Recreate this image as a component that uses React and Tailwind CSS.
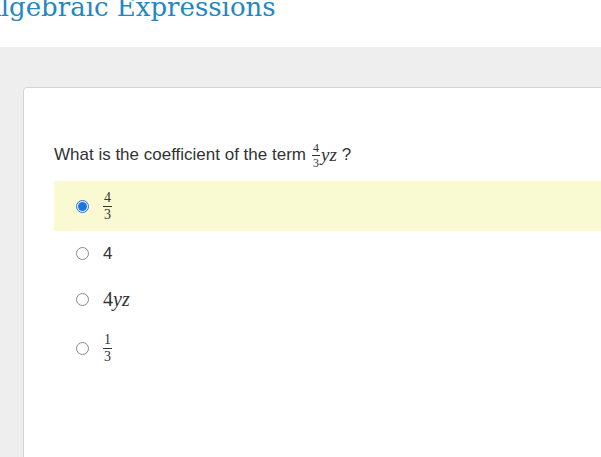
export default function App() {
  const serif = '"Liberation Serif", "Times New Roman", serif';
  const Frac = ({ n, d, size = "text-[14px]" }) => (
    <span className={`inline-flex flex-col items-center leading-none ${size}`} style={{ fontFamily: serif }}>
      <span className="px-[1px] pb-[1px] border-b border-[#333]">{n}</span>
      <span className="px-[1px] pt-[1px]">{d}</span>
    </span>
  );
  const Radio = ({ checked }) =>
    checked ? (
      <span className="w-[13px] h-[13px] rounded-full border border-[#1e6fd9] bg-white flex items-center justify-center shrink-0">
        <span className="w-[9px] h-[9px] rounded-full bg-[#1e74e0]" />
      </span>
    ) : (
      <span className="w-[13px] h-[13px] rounded-full border border-[#8a8a8a] bg-white shrink-0" />
    );
  return (
    <div className="w-[601px] h-[457px] overflow-hidden bg-[#eeeeee]" style={{ fontFamily: '"Liberation Sans", Arial, sans-serif' }}>
      <div className="h-[47px] bg-white overflow-hidden">
        <div className="text-[26px] leading-none text-[#2387c0] whitespace-nowrap -mt-[6px] -ml-[18px]" style={{ fontFamily: '"DejaVu Serif", serif' }}>
          Algebraic Expressions
        </div>
      </div>
      <div className="pt-[40px] pl-[23px]">
        <div className="w-[620px] h-[400px] bg-white border border-[#d3d3d3] rounded-tl-[4px]">
          <div className="pl-[30px] pt-[56px]">
            <div className="flex items-center h-[22px] text-[17px] text-[#333]">
              <span>What is the coefficient of the term</span>
              <span className="ml-[6px] flex items-center text-[#333]">
                <Frac n="4" d="3" size="text-[12px]" />
                <span className="italic text-[19px] ml-[1px]" style={{ fontFamily: serif }}>yz</span>
              </span>
              <span className="ml-[5px]">?</span>
            </div>
            <div className="mt-[15px]">
              <div className="h-[50px] bg-[#fafad2] flex items-center pl-[22px] gap-[14px] text-[#333]">
                <Radio checked />
                <Frac n="4" d="3" />
              </div>
              <div className="h-[45px] flex items-center pl-[22px] gap-[14px] text-[17px] text-[#333]">
                <Radio />
                <span>4</span>
              </div>
              <div className="h-[46px] flex items-center pl-[22px] gap-[14px] text-[20px] text-[#333]" style={{ fontFamily: serif }}>
                <Radio />
                <span>
                  4<span className="italic">yz</span>
                </span>
              </div>
              <div className="h-[52px] flex items-center pl-[22px] gap-[14px] text-[#333]">
                <Radio />
                <Frac n="1" d="3" />
              </div>
            </div>
          </div>
        </div>
      </div>
    </div>
  );
}
